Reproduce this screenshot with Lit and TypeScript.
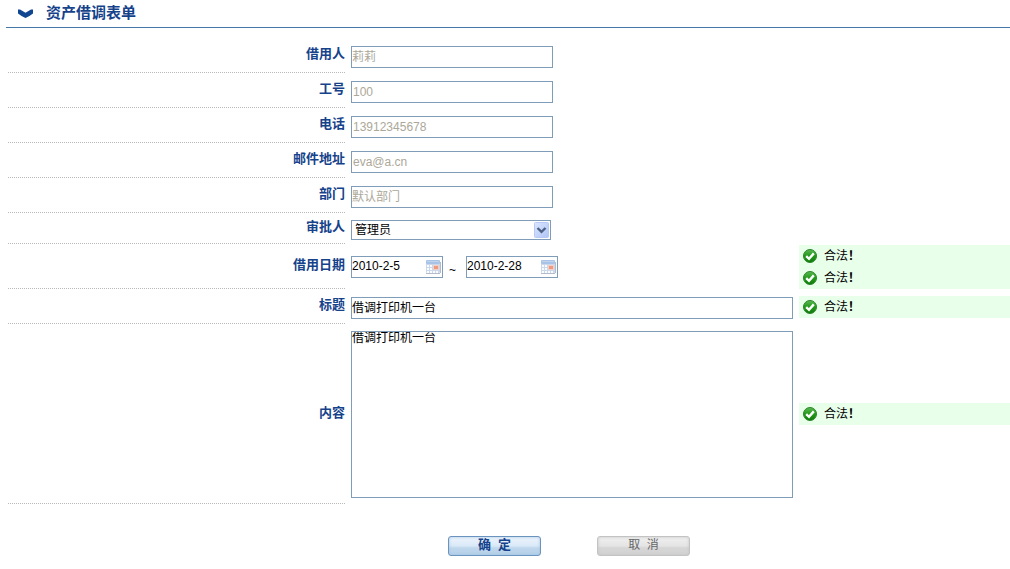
import { LitElement, html, css, svg, nothing } from "lit";
import { customElement, property } from "lit/decorators.js";
import { classMap } from "lit/directives/class-map.js";

const calendarIcon = html`<svg width="15" height="14" viewBox="0 0 15 14" aria-hidden="true">
  <rect x="0" y="1" width="14" height="12" rx="1" fill="#cbd8ec" />
  <rect x="0" y="0" width="14" height="4" rx="1" fill="#a9c3e6" />
  <rect x="1" y="1" width="12" height="1" fill="#bfd3ef" />
  <g fill="#fbfcff">
    ${[5, 8, 11].map((y) => [1, 4, 7, 10].map((x) => svg`<rect x=${x} y=${y} width="2" height="2" />`))}
  </g>
  <rect x="7" y="5" width="6" height="5" fill="#f3cfc4" />
  <rect x="8" y="6" width="4" height="3" fill="#ee9a80" />
  <path d="M0 13.5h14M14.5 2v11" stroke="#b4bccb" fill="none" />
</svg>`;

const okIcon = html`<svg width="14" height="14" viewBox="0 0 14 14" aria-hidden="true">
  <defs>
    <linearGradient id="g" x1="0" y1="0" x2="0" y2="1">
      <stop offset="0" stop-color="#5cb856" />
      <stop offset="0.5" stop-color="#239a1a" />
      <stop offset="1" stop-color="#0f7a0a" />
    </linearGradient>
  </defs>
  <circle cx="7" cy="7" r="6.5" fill="url(#g)" stroke="#2a8528" />
  <path d="M3.2 7.2 L6 9.8 L10.8 4.4" fill="none" stroke="#fff" stroke-width="2.4" />
</svg>`;

const fontStack = css`"Liberation Sans", "Noto Sans CJK SC", sans-serif`;

@customElement("valid-note")
export class ValidNote extends LitElement {
  static styles = css`
    :host {
      display: flex;
      align-items: center;
      gap: 7px;
      height: 22px;
      padding-left: 4px;
      background: #e8ffea;
      font: 12px/22px ${fontStack};
      color: #000;
    }
    .mark {
      font-weight: bold;
    }
  `;

  render() {
    return html`${okIcon}<span>合法<span class="mark">！</span></span>`;
  }
}

@customElement("form-row")
export class FormRow extends LitElement {
  @property() kind = "text";
  @property() label = "";
  @property() name = "";
  @property() value = "";
  @property({ attribute: "value-to" }) valueTo = "";
  @property({ type: Boolean }) locked = false;
  @property({ type: Number }) notes = 0;

  static styles = css`
    :host {
      display: grid;
      grid-template-columns: minmax(0, 337fr) 442px minmax(0, 211fr);
      column-gap: 6px;
      font: 12px/16px ${fontStack};
    }
    .label {
      display: flex;
      align-items: center;
      justify-content: flex-end;
      padding-bottom: 2px;
      border-bottom: 1px dotted #b8b8b8;
      font-size: 13px;
      font-weight: bold;
      color: #15428b;
    }
    .field {
      display: flex;
      padding: 8px 0 5px;
    }
    .field.select {
      padding: 7px 0 4px;
    }
    .field.dates {
      padding: 12px 0 11px;
    }
    .field.area {
      padding: 7px 0 6px;
    }
    input,
    select,
    textarea {
      box-sizing: border-box;
      margin: 0;
      border: 1px solid #7f9db9;
      border-radius: 0;
      outline: none;
      background: #fff;
      color: #000;
      font: 12px/16px ${fontStack};
    }
    input {
      width: 202px;
      height: 22px;
      padding: 0 1px;
    }
    input.han {
      padding: 0 0 4px;
    }
    input:disabled {
      color: #aca899;
    }
    input.wide {
      width: 100%;
    }
    textarea {
      display: block;
      width: 100%;
      height: 167px;
      padding: 0;
      line-height: 12px;
      resize: none;
    }
    .combo {
      position: relative;
      display: flex;
    }
    select {
      appearance: none;
      width: 200px;
      height: 20px;
      padding: 0 20px 0 3px;
    }
    .arrow {
      position: absolute;
      top: 2px;
      right: 2px;
      pointer-events: none;
    }
    .date {
      display: flex;
      align-items: center;
      box-sizing: border-box;
      width: 92px;
      height: 22px;
      border: 1px solid #7f9db9;
    }
    .date input {
      flex: 1;
      min-width: 0;
      height: 20px;
      padding: 0 0 2px;
      border: 0;
    }
    .pick {
      display: flex;
      width: 16px;
      margin: 0;
      padding: 0;
      border: 0;
      background: none;
    }
    .to {
      width: 23px;
      padding-top: 6px;
      padding-right: 4px;
      box-sizing: border-box;
      text-align: center;
    }
    .notes {
      display: flex;
      flex-direction: column;
      justify-content: center;
    }
  `;

  private dateBox(id: string, value: string, title: string) {
    return html`<div class="date">
      <input id=${id} type="text" aria-label=${title} .value=${value} />
      <button class="pick" type="button" aria-label="选择日期">${calendarIcon}</button>
    </div>`;
  }

  private field() {
    switch (this.kind) {
      case "select":
        return html`<div class="field select">
          <div class="combo">
            <select id="f" name=${this.name}>
              <option>${this.value}</option>
            </select>
            <svg class="arrow" width="15" height="16" viewBox="0 0 15 16" aria-hidden="true">
              <defs>
                <linearGradient id="a" x1="0" y1="0" x2="1" y2="1">
                  <stop offset="0" stop-color="#dbe6fe" />
                  <stop offset="1" stop-color="#afc5f6" />
                </linearGradient>
              </defs>
              <rect x="0.5" y="0.5" width="14" height="15" rx="1" fill="url(#a)" stroke="#b7caf5" />
              <path d="M3.5 6 L7.5 9.8 L11.5 6" fill="none" stroke="#4d6185" stroke-width="2.4" />
            </svg>
          </div>
        </div>`;
      case "dates":
        return html`<div class="field dates">
          ${this.dateBox("f", this.value, "开始日期")}
          <span class="to">~</span>
          ${this.dateBox("t", this.valueTo, "结束日期")}
        </div>`;
      case "area":
        return html`<div class="field area">
          <textarea id="f" name=${this.name} .value=${this.value}></textarea>
        </div>`;
      default:
        return html`<div class="field">
          <input
            id="f"
            type="text"
            class=${classMap({ wide: !this.locked, han: /[\u4e00-\u9fff]/.test(this.value) })}
            name=${this.name}
            .value=${this.value}
            ?disabled=${this.locked}
          />
        </div>`;
    }
  }

  render() {
    return html`
      <label class="label" for="f">${this.label}</label>
      ${this.field()}
      ${this.notes
        ? html`<div class="notes">
            ${Array.from({ length: this.notes }, () => html`<valid-note></valid-note>`)}
          </div>`
        : nothing}
    `;
  }
}

@customElement("app-root")
export class AppRoot extends LitElement {
  static styles = css`
    :host {
      display: block;
      background: #fff;
      font: 12px/16px ${fontStack};
    }
    .head {
      display: flex;
      align-items: center;
      gap: 13px;
      height: 27px;
      margin-left: 6px;
      padding-left: 12px;
      border-bottom: 1px solid #4578a8;
    }
    h1 {
      margin: 0;
      padding-bottom: 2px;
      font-size: 15px;
      line-height: 24px;
      color: #15428b;
    }
    form {
      padding: 10px 0 0 8px;
    }
    .actions {
      display: grid;
      grid-template-columns: minmax(0, 337fr) 442px minmax(0, 211fr);
      column-gap: 6px;
      padding: 32px 0 13px;
    }
    .buttons {
      grid-column: 2;
      display: flex;
      justify-content: center;
      gap: 56px;
      padding-right: 6px;
    }
    button {
      width: 93px;
      height: 20px;
      padding: 0 0 2px;
      border-radius: 3px;
      white-space: pre;
      font-family: inherit;
      line-height: 16px;
    }
    .ok {
      border: 1px solid #6a93bd;
      background: linear-gradient(#eef5fd, #d9e8f7 50%, #c0d7ec 60%, #b4d0e9);
      box-shadow: inset 0 0 3px #a3c3e2;
      font-size: 13px;
      font-weight: bold;
      color: #15428b;
    }
    .cancel {
      border: 1px solid #c3c3c3;
      background: linear-gradient(#f0f0f0, #e4e4e4 50%, #d6d6d7 60%, #d2d2d3);
      box-shadow: inset 0 0 3px #c4c4c4;
      font-size: 12px;
      color: #666;
    }
  `;

  render() {
    return html`
      <header class="head">
        <svg width="15" height="9" viewBox="0 0 15 9" aria-hidden="true">
          <path d="M0 0.5 L2 0.5 L7.5 3.8 L13 0.5 L15 0.5 V4.5 Q12 7 7.5 9 Q3 7 0 4.5 Z" fill="#11458f" />
        </svg>
        <h1>资产借调表单</h1>
      </header>
      <form @submit=${(e: Event) => e.preventDefault()}>
        <form-row label="借用人" name="borrower" value="莉莉" locked></form-row>
        <form-row label="工号" name="staffNo" value="100" locked></form-row>
        <form-row label="电话" name="phone" value="13912345678" locked></form-row>
        <form-row label="邮件地址" name="email" value="eva@a.cn" locked></form-row>
        <form-row label="部门" name="department" value="默认部门" locked></form-row>
        <form-row kind="select" label="审批人" name="approver" value="管理员"></form-row>
        <form-row kind="dates" label="借用日期" value="2010-2-5" value-to="2010-2-28" notes="2"></form-row>
        <form-row label="标题" name="title" value="借调打印机一台" notes="1"></form-row>
        <form-row kind="area" label="内容" name="content" value="借调打印机一台" notes="1"></form-row>
        <div class="actions">
          <div class="buttons">
            <button class="ok" type="submit">确  定</button>
            <button class="cancel" type="button">取  消</button>
          </div>
        </div>
      </form>
    `;
  }
}
